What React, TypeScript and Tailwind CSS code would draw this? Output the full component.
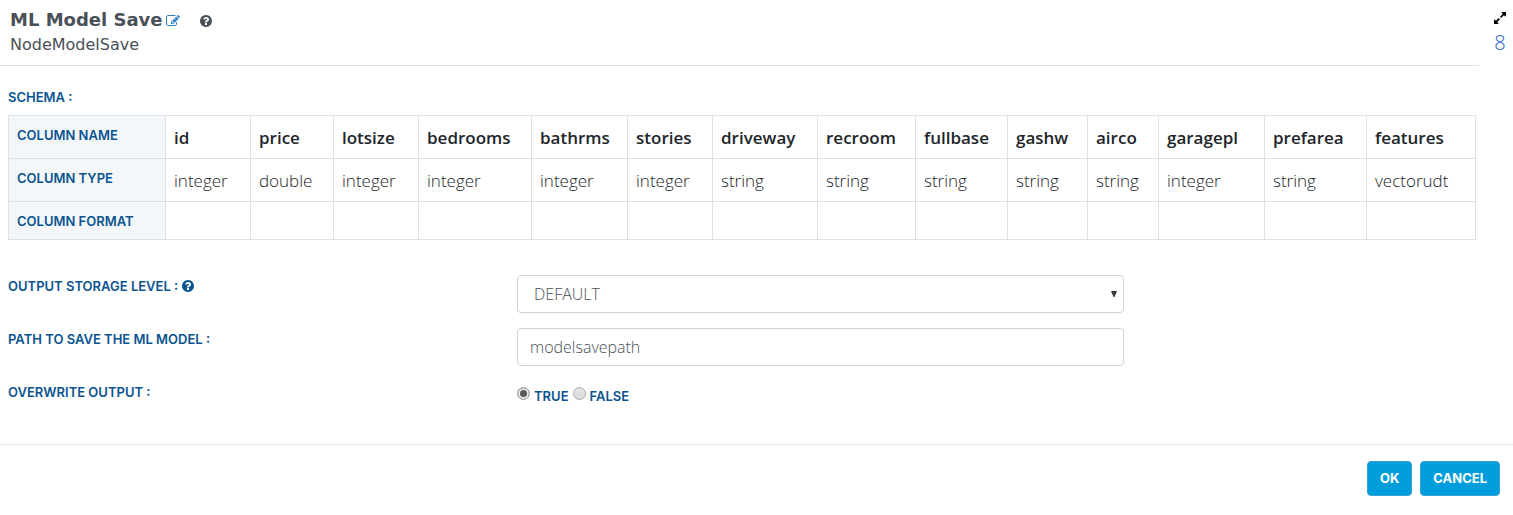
import { useState } from 'react';

type Column = { name: string; type: string; format: string; width: string };

const columns: Column[] = [
  { name: 'id', type: 'integer', format: '', width: 'w-[85px]' },
  { name: 'price', type: 'double', format: '', width: 'w-[83px]' },
  { name: 'lotsize', type: 'integer', format: '', width: 'w-[85px]' },
  { name: 'bedrooms', type: 'integer', format: '', width: 'w-[113px]' },
  { name: 'bathrms', type: 'integer', format: '', width: 'w-[96px]' },
  { name: 'stories', type: 'integer', format: '', width: 'w-[85px]' },
  { name: 'driveway', type: 'string', format: '', width: 'w-[105px]' },
  { name: 'recroom', type: 'string', format: '', width: 'w-[98px]' },
  { name: 'fullbase', type: 'string', format: '', width: 'w-[92px]' },
  { name: 'gashw', type: 'string', format: '', width: 'w-[80px]' },
  { name: 'airco', type: 'string', format: '', width: 'w-[71px]' },
  { name: 'garagepl', type: 'integer', format: '', width: 'w-[106px]' },
  { name: 'prefarea', type: 'string', format: '', width: 'w-[102px]' },
  { name: 'features', type: 'vectorudt', format: '', width: 'w-[109px]' },
];

const LABEL = "font-['Inter',sans-serif] text-[13px] leading-5 font-semibold text-[#0b5490]";
const FIELD_LABEL = `${LABEL} pt-px`;
const ROW_HEAD = `${LABEL} border border-[#dee2e6] bg-[#f3f7fa] px-2 pt-[9px] pb-2 text-left align-top`;
const CELL = "border border-[#dee2e6] px-2 pt-[10px] pb-2 text-left align-top font-['Open_Sans',sans-serif] text-[17px] leading-6 text-[#212529]";
const EMPTY_CELL = 'border border-[#dee2e6]';
const FIELD =
  "h-[38px] w-full appearance-none rounded border border-[#ced4da] bg-white font-['Open_Sans',sans-serif] text-base font-light text-[#495057]";
const RADIO =
  'mt-px size-[13px] appearance-none rounded-full border border-[#a9a9a9] bg-linear-to-b from-[#e4e4e4] to-[#dcdcdc] checked:bg-none checked:bg-[#5a5a5a] checked:shadow-[inset_0_0_0_2px_#e6e6e6]';
const BUTTON =
  "h-[35px] rounded border border-[#3d9fd8] bg-[#009ddc] px-3 font-['Inter',sans-serif] text-[13px] font-bold text-white";

const QUESTION =
  'M1024 1376v-192q0-14-9-23t-23-9h-192q-14 0-23 9t-9 23v192q0 14 9 23t23 9h192q14 0 23-9t9-23zm256-672q0-88-55.5-163t-138.5-116-170-41q-243 0-371 213-15 24 8 42l132 100q7 6 19 6 16 0 25-12 53-68 86-92 34-24 86-24 48 0 85.5 26t37.5 59q0 38-20 61t-68 45q-63 28-115.5 86.5t-52.5 125.5v36q0 14 9 23t23 9h192q14 0 23-9t9-23q0-19 21.5-49.5t54.5-49.5q32-18 49-28.5t46-35 44.5-48 28-60.5 12.5-81zm384 192q0 209-103 385.5t-279.5 279.5-385.5 103-385.5-103-279.5-279.5-103-385.5 103-385.5 279.5-279.5 385.5-103 385.5 103 279.5 279.5 103 385.5z';
const PENCIL =
  'M888 1184l116-116-152-152-116 116v56h96v96h56zm440-720q-16-16-33 1l-350 350q-17 17-1 33t33-1l350-350q17-17 1-33zm80 594v190q0 119-84.5 203.5t-203.5 84.5h-832q-119 0-203.5-84.5t-84.5-203.5v-832q0-119 84.5-203.5t203.5-84.5h832q63 0 117 25 15 7 18 23 3 17-9 29l-49 49q-14 14-32 8-23-6-45-6h-832q-66 0-113 47t-47 113v832q0 66 47 113t113 47h832q66 0 113-47t47-113v-126q0-13 9-22l64-64q15-15 35-7t20 29zm-96-738l288 288-672 672h-288v-288zm444 132l-92 92-288-288 92-92q28-28 68-28t68 28l152 152q28 28 28 68t-28 68z';
const EXPAND =
  'M883 1056q0 13-10 23l-332 332 144 144q19 19 19 45t-19 45-45 19h-448q-26 0-45-19t-19-45v-448q0-26 19-45t45-19 45 19l144 144 332-332q10-10 23-10t23 10l114 114q10 10 10 23zm781-864v448q0 26-19 45t-45 19-45-19l-144-144-332 332q-10 10-23 10t-23-10l-114-114q-10-10-10-23t10-23l332-332-144-144q-19-19-19-45t19-45 45-19h448q26 0 45 19t19 45z';

function Glyph({ path, className }: { path: string; className: string }) {
  return (
    <svg viewBox="0 0 1792 1792" fill="currentColor" aria-hidden="true" className={className}>
      <path d={path} />
    </svg>
  );
}

function Header() {
  return (
    <header className="flex">
      <div className="flex-1 border-b border-[#dee2e6] px-[10px] py-2 font-['DejaVu_Sans',Verdana,sans-serif] text-[#495057]">
        <div className="flex items-center">
          <h1 className="text-lg leading-6 font-bold">ML Model Save</h1>
          <button type="button" aria-label="Edit name" className="ml-[3px] pt-px text-[#2a7fc1]">
            <Glyph path={PENCIL} className="size-[14px]" />
          </button>
          <button type="button" aria-label="Help" className="ml-[19px] pt-px">
            <Glyph path={QUESTION} className="size-[14px]" />
          </button>
        </div>
        <p className="mt-px text-base leading-6">NodeModelSave</p>
      </div>
      <div className="flex w-[34px] flex-col items-center pt-[11px] pl-2">
        <button type="button" aria-label="Expand" className="text-black">
          <Glyph path={EXPAND} className="size-[14px]" />
        </button>
        <a href="#" className="mt-[6px] font-['Open_Sans',sans-serif] text-xl leading-6 font-light text-[#1f69c0]">
          8
        </a>
      </div>
    </header>
  );
}

function SchemaTable() {
  return (
    <section className="pt-[21px] pr-[37px] pl-2">
      <h2 id="schema" className={LABEL}>SCHEMA :</h2>
      <table aria-labelledby="schema" className="mt-2 w-full table-fixed border-collapse">
        <colgroup>
          <col className="w-[157px]" />
          {columns.map((c) => (
            <col key={c.name} className={c.width} />
          ))}
        </colgroup>
        <tbody>
          <tr>
            <th scope="row" className={ROW_HEAD}>COLUMN NAME</th>
            {columns.map((c) => (
              <th key={c.name} scope="col" className={`${CELL} font-semibold`}>{c.name}</th>
            ))}
          </tr>
          <tr>
            <th scope="row" className={ROW_HEAD}>COLUMN TYPE</th>
            {columns.map((c) => (
              <td key={c.name} className={`${CELL} font-light`}>{c.type}</td>
            ))}
          </tr>
          <tr>
            <th scope="row" className={ROW_HEAD}>COLUMN FORMAT</th>
            {columns.map((c) => (
              <td key={c.name} className={EMPTY_CELL}>{c.format}</td>
            ))}
          </tr>
        </tbody>
      </table>
    </section>
  );
}

export default function App() {
  const [storage, setStorage] = useState('DEFAULT');
  const [path, setPath] = useState('modelsavepath');
  const [overwrite, setOverwrite] = useState(true);

  return (
    <main className="min-h-screen bg-white">
      <Header />
      <SchemaTable />
      <form onSubmit={(e) => e.preventDefault()}>
        <div className="grid grid-cols-[509fr_607fr_389fr] gap-y-[15px] pt-[35px] pb-[38px] pl-2">
          <div className="flex items-center gap-[3px] self-start">
            <label htmlFor="storage" className={FIELD_LABEL}>OUTPUT STORAGE LEVEL :</label>
            <Glyph path={QUESTION} className="size-[14px] text-[#0b5490]" />
          </div>
          <div className="relative">
            <select
              id="storage"
              value={storage}
              onChange={(e) => setStorage(e.target.value)}
              className={`${FIELD} pr-8 pl-4`}
            >
              <option>DEFAULT</option>
              <option>MEMORY_ONLY</option>
              <option>DISK_ONLY</option>
            </select>
            <svg
              viewBox="0 0 6 6"
              aria-hidden="true"
              className="pointer-events-none absolute top-4 right-[7px] size-[6px] fill-[#343a40]"
            >
              <path d="M0 0h6L3.5 6h-1z" />
            </svg>
          </div>
          <span />

          <label htmlFor="path" className={FIELD_LABEL}>PATH TO SAVE THE ML MODEL :</label>
          <input
            id="path"
            type="text"
            value={path}
            onChange={(e) => setPath(e.target.value)}
            className={`${FIELD} px-3`}
          />
          <span />

          <span id="overwrite" className={FIELD_LABEL}>OVERWRITE OUTPUT :</span>
          <div role="radiogroup" aria-labelledby="overwrite" className="flex h-[25px] items-end gap-1">
            <label className={`${LABEL} flex items-start gap-1`}>
              <input type="radio" name="overwrite" checked={overwrite} onChange={() => setOverwrite(true)} className={RADIO} />
              TRUE
            </label>
            <label className={`${LABEL} flex items-start gap-1`}>
              <input type="radio" name="overwrite" checked={!overwrite} onChange={() => setOverwrite(false)} className={RADIO} />
              FALSE
            </label>
          </div>
        </div>
        <footer className="flex justify-end gap-2 border-t border-[#e9ecef] px-[13px] py-4">
          <button type="submit" className={BUTTON}>OK</button>
          <button type="button" className={BUTTON}>CANCEL</button>
        </footer>
      </form>
    </main>
  );
}
